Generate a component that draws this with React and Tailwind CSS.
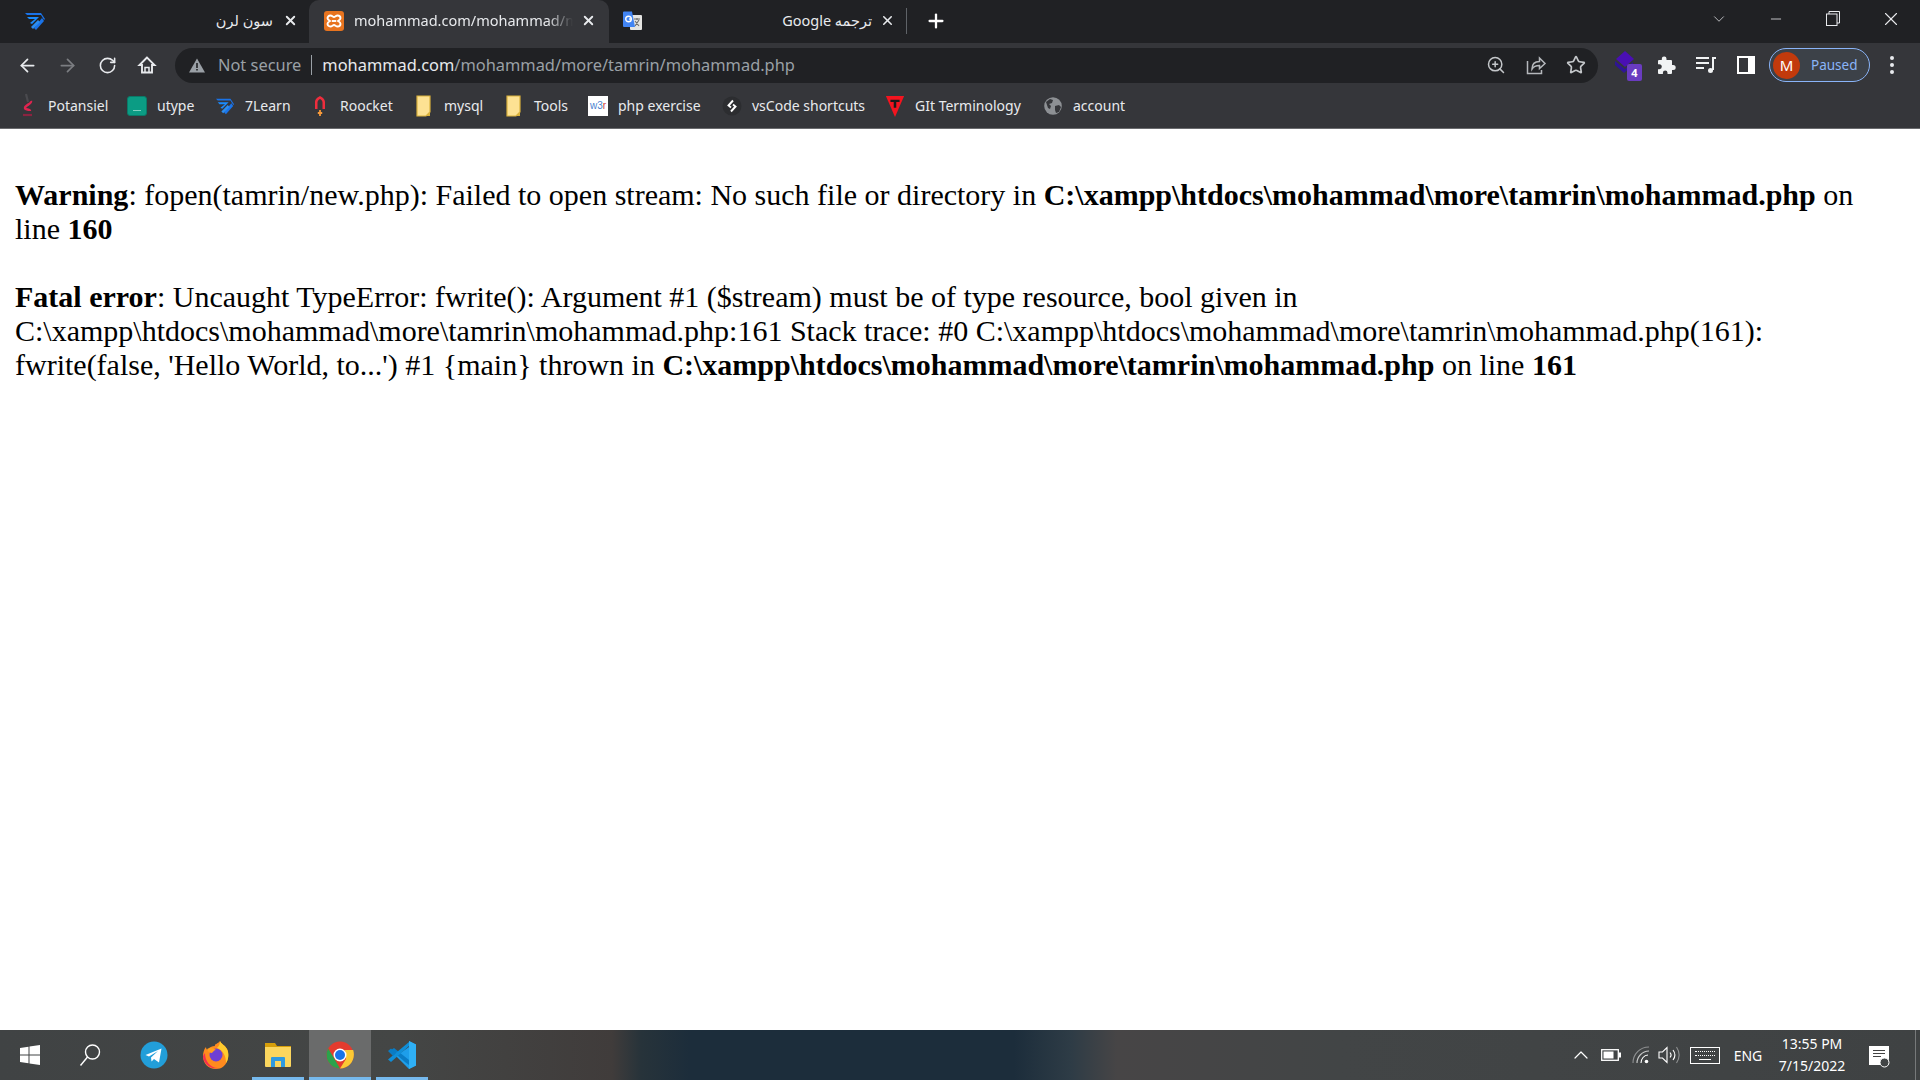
import React from "react";
import { ArrowLeft, ArrowRight, RotateCw, ZoomIn, Star, Plus, X, Minus, ChevronDown, ChevronUp } from "lucide-react";

const ui = "font-['Noto_Sans','DejaVu_Sans',sans-serif]";

function SevenLearn({ s = 22 }) {
  return (
    <svg width={s} height={s} viewBox="0 0 22 22" fill="none">
      <path d="M1 3h16l4 6-1 1-3-5H3z" fill="#1a73e8" />
      <path d="M3 7h12L8 14l-2-1 5-4H5z" fill="#1a8cff" />
      <path d="M18 8l2 3-8 9-2-2z" fill="#1a73e8" />
      <path d="M14 10l2 2-7 7-2-2z" fill="#2c8df0" />
    </svg>
  );
}
function Xampp() {
  return (
    <svg width="20" height="20" viewBox="0 0 20 20">
      <rect width="20" height="20" rx="3" fill="#e8741f" />
      <path d="M6.500 4.500c1.500 0 2.300 1.500 3.500 1.500s2-1.500 3.500-1.500c2 0 3 1.300 3 2.800 0 1.300-1.200 2-2.500 2.700 1.300.7 2.500 1.400 2.500 2.700 0 1.500-1 2.800-3 2.800-1.500 0-2.300-1.500-3.500-1.500s-2 1.500-3.500 1.500c-2 0-3-1.300-3-2.800 0-1.300 1.200-2 2.500-2.700-1.300-.7-2.500-1.400-2.500-2.700 0-1.500 1-2.800 3-2.800z" fill="none" stroke="#fff" strokeWidth="1.900" />
      <path d="M8 10h4" stroke="#fff" strokeWidth="1.900" />
    </svg>
  );
}
function Translate() {
  return (
    <svg width="22" height="22" viewBox="0 0 22 22">
      <rect x="9" y="5" width="12" height="15" rx="1" fill="#e4e4e2" />
      <path d="M13 9h6M16 8v2M14 16l4-6M14 11l4 5" stroke="#6b6b6b" strokeWidth="1.100" />
      <path d="M2 2.500a1 1 0 0 1 1-1h8l3 15.500H3a1 1 0 0 1-1-1z" fill="#4285f4" />
      <circle cx="7.500" cy="9" r="2.800" fill="none" stroke="#fff" strokeWidth="1.400" />
      <path d="M8 9h3" stroke="#fff" strokeWidth="1.300" />
    </svg>
  );
}
function Potansiel() {
  return (
    <svg width="20" height="26" viewBox="0 0 20 26" fill="none">
      <path d="M8 1l2 8" stroke="#4a4a4e" strokeWidth="2.200" />
      <path d="M13 8c1 3-6 4-6 7 0 2 5 1 5 3" stroke="#e0244f" strokeWidth="2.400" />
      <path d="M5 22h9" stroke="#8a2440" strokeWidth="2.200" />
    </svg>
  );
}
function Utype() {
  return (
    <div className="w-5 h-5 rounded-[3px] bg-[#0b9c84] border border-[#0a7a68] flex items-end justify-center pb-1">
      <div className="w-2 h-px bg-[#7fd0c2]" />
    </div>
  );
}
function Roocket() {
  return (
    <svg width="20" height="24" viewBox="0 0 20 24" fill="none">
      <path d="M5 15V8c0-3 3-5 5-6 2 1 5 3 5 6v7h-2.500V8.500c0-2-1.500-3-2.500-3.500-1 .5-2.500 1.500-2.500 3.500V15z" fill="#ee2d3d" />
      <path d="M10 16v6M7.800 19h4.400" stroke="#f6993a" strokeWidth="1.800" />
    </svg>
  );
}
function Folder() {
  return (
    <svg width="16" height="22" viewBox="0 0 16 22">
      <path d="M1 1h13v16l-4 4H1z" fill="#fde293" stroke="#d9b13c" strokeWidth="1.200" />
      <path d="M14 17v4h-4z" fill="#d9b13c" />
    </svg>
  );
}
function W3r() {
  return (
    <div className="w-5 h-5 bg-white flex items-center justify-center text-[10px] leading-none font-['Liberation_Sans',sans-serif]">
      <span className="text-[#4a7fd0]">w3</span>
      <span className="text-[#d23c3c]">r</span>
    </div>
  );
}
function VsShort() {
  return (
    <svg width="20" height="20" viewBox="0 0 20 20" fill="none">
      <circle cx="10" cy="10" r="9.500" fill="#2c2d30" />
      <path d="M11 4.500L6.500 9.500l2.500 2M9 15.500l4.500-5-2.500-2" stroke="#fff" strokeWidth="1.900" />
    </svg>
  );
}
function GitT() {
  return (
    <svg width="22" height="26" viewBox="0 0 22 26">
      <path d="M1 2h20L11 25z" fill="#f4141f" />
      <path d="M6 6h10v2.500h-3.600V15H9.600V8.500H6z" fill="#1b1b1b" />
    </svg>
  );
}
function Globe() {
  return (
    <svg width="20" height="20" viewBox="0 0 20 20">
      <circle cx="10" cy="10" r="8.800" fill="#8d9094" />
      <path d="M3 6l4-3 3 1-1 3-3 1 2 2-1 3-2-1zM12 10l4-1 2 2-2 5-3 1-1-3z" fill="#35363a" />
    </svg>
  );
}
function Share() {
  return (
    <svg width="22" height="22" viewBox="0 0 22 22" fill="none" stroke="#b5b8bc" strokeWidth="1.500">
      <path d="M2.500 7v12.500h14V16" />
      <path d="M7 15c0-5 3-7.500 7.500-7.500V4l5.500 5.500-5.500 5V11.500C11 11.500 8.500 12.500 7 15z" />
    </svg>
  );
}
function Ext() {
  return (
    <svg width="26" height="30" viewBox="0 0 26 30">
      <path d="M2 11l10 8 8-7v3l-9 8-9-8z" fill="#2f1496" />
      <path d="M12 1l9 8-9 8-9-8z" fill="#4a0fb4" />
    </svg>
  );
}
function PuzzleFill() {
  return (
    <svg width="20" height="20" viewBox="0 0 20 20" fill="#f1f3f4">
      <path d="M8 1.500a2.300 2.300 0 0 1 2.500 2.300V5H15a1 1 0 0 1 1 1v4h1.200a2.300 2.300 0 0 1 0 5H16v3a1 1 0 0 1-1 1h-3.500v-1.300a2.300 2.300 0 0 0-4.600 0V19H3a1 1 0 0 1-1-1v-3.800h1.300a2.500 2.500 0 0 0 0-5H2V6a1 1 0 0 1 1-1h2.800V3.800A2.300 2.300 0 0 1 8 1.500z" />
    </svg>
  );
}
function Music() {
  return (
    <svg width="22" height="20" viewBox="0 0 22 20" fill="none" stroke="#f1f3f4" strokeWidth="2">
      <path d="M1 3h13M1 8h13M1 13h8" />
      <path d="M18 15V3h3" />
      <circle cx="15.500" cy="15.500" r="2.500" fill="#f1f3f4" stroke="none" />
      <path d="M18 2v13" />
    </svg>
  );
}
function Side() {
  return (
    <div className="w-[18px] h-[18px] bg-white flex items-center pl-[2px]">
      <div className="w-[9px] h-[14px] bg-[#35363a]" />
    </div>
  );
}
function Home() {
  return (
    <svg width="20" height="20" viewBox="0 0 20 20" fill="none" stroke="#e8eaed" strokeWidth="1.900">
      <path d="M10 2.500L2.500 10H5v7.500h10V10h2.500z" />
      <path d="M8 17.500v-5h4v5" strokeWidth="1.500" />
    </svg>
  );
}
function Warn() {
  return (
    <svg width="16" height="15" viewBox="0 0 16 15">
      <path d="M8 .5L16 14.500H0z" fill="#9aa0a6" />
      <path d="M7.200 5h1.600v5H7.200zM7.200 11h1.600v1.600H7.200z" fill="#202124" />
    </svg>
  );
}
function Restore() {
  return (
    <svg width="14" height="15" viewBox="0 0 14 15" fill="none" stroke="#e8eaed" strokeWidth="1">
      <rect x=".5" y="3" width="10.500" height="11.500" />
      <path d="M3 3V.5h10.500V12H11" />
    </svg>
  );
}
function WinLogo() {
  return (
    <svg width="20" height="20" viewBox="0 0 20 20" fill="#fff">
      <path d="M0 3l8.500-1.300v7.800H0zM9.500 1.500L20 0v9.500H9.500zM0 10.500h8.500v7.800L0 17zM9.500 10.500H20V20L9.500 18.500z" />
    </svg>
  );
}
function SearchTb() {
  return (
    <svg width="22" height="24" viewBox="0 0 22 24" fill="none" stroke="#fff" strokeWidth="1.400">
      <circle cx="13.500" cy="9" r="7" />
      <path d="M8.500 14L1.500 22.500" />
    </svg>
  );
}
function Telegram() {
  return (
    <svg width="28" height="28" viewBox="0 0 28 28">
      <circle cx="14" cy="14" r="13.500" fill="#229ed9" />
      <path d="M5.500 14l16-6.500-2.500 14-5-3.500-2.500 2.500-.5-4 7-6.500-9 5.500z" fill="#fff" />
    </svg>
  );
}
function Firefox() {
  return (
    <svg width="28" height="30" viewBox="0 0 28 30">
      <path d="M18 1c1 3 5 4 7 8 3 6 1 20-11 20C6 29 1 23 1 16c0-3 1-7 3-9 0 2 1 3 2 3 1-3 4-4 7-4-1-2 3-2 5-5z" fill="#ff8a1e" />
      <path d="M18 1c1 3 5 4 7 8 2 4 2 10-1 14 0-7-3-13-9-15 2-2 3-4 3-7z" fill="#ffcb2e" />
      <path d="M3 13c0 8 5 15 13 15C8 30 1 23 1 16z" fill="#f5304e" />
      <circle cx="14" cy="15" r="6.500" fill="#6d3fd4" />
      <path d="M5 9c3-2 7-1 9 1-2 0-3 2-4 3-2 0-4-1-5-4z" fill="#ff9f1e" />
    </svg>
  );
}
function Files() {
  return (
    <svg width="28" height="26" viewBox="0 0 28 26">
      <path d="M1 1h10l2 3h14v3H1z" fill="#d69e0a" />
      <path d="M1 5h26v19a1 1 0 0 1-1 1H2a1 1 0 0 1-1-1z" fill="#fbd65e" />
      <path d="M7 25V16a1 1 0 0 1 1-1h12a1 1 0 0 1 1 1v9h-4v-6h-6v6z" fill="#2f9ae0" />
    </svg>
  );
}
function Chrome() {
  return (
    <svg width="28" height="28" viewBox="0 0 28 28">
      <circle cx="14" cy="14" r="13.500" fill="#e33b2e" />
      <path d="M2.200 7.500L8.500 18l5.500 9.500A13.500 13.500 0 0 1 2.200 7.500z" fill="#2ba24c" />
      <path d="M14 27.500L20 18l-1-9h8.200C30 18 24 27.500 14 27.500z" fill="#fcc934" />
      <circle cx="14" cy="14" r="6.500" fill="#fff" />
      <circle cx="14" cy="14" r="5" fill="#1a73e8" />
    </svg>
  );
}
function VSCode() {
  return (
    <svg width="30" height="30" viewBox="0 0 30 30">
      <path d="M22 1l7 3.500v21L22 29 9 16l13-9V1z" fill="#1e9eea" />
      <path d="M22 1v28l7-3.500v-21z" fill="#2fb0f5" />
      <path d="M4 10l3-2 15 12v5l-4-3z" fill="#0a7cc5" />
      <path d="M1 19.500l3 2.500L22 6V2z" fill="#0f8ed8" />
      <path d="M1 11l3-2.500 5 4.500-3 3z" fill="#0a7cc5" />
    </svg>
  );
}
function Battery() {
  return (
    <svg width="20" height="12" viewBox="0 0 20 12" fill="none">
      <rect x=".7" y=".7" width="16.600" height="10.600" stroke="#fff" strokeWidth="1.300" />
      <rect x="2.500" y="2.500" width="10" height="7" fill="#fff" />
      <rect x="18" y="3.500" width="2" height="5" fill="#fff" />
    </svg>
  );
}
function Wifi() {
  return (
    <svg width="18" height="18" viewBox="0 0 18 18" fill="none">
      <path d="M1 17C1 8 8 1 17 1" stroke="#8f9192" strokeWidth="1.100" />
      <path d="M5 17c0-6 5-12 12-12" stroke="#c9caca" strokeWidth="1.100" />
      <path d="M9 17c0-4 3-8 7-8" stroke="#fff" strokeWidth="1.100" />
      <circle cx="14.500" cy="15.500" r="1.800" fill="#fff" />
    </svg>
  );
}
function Speaker() {
  return (
    <svg width="22" height="18" viewBox="0 0 22 18" fill="none" stroke="#fff" strokeWidth="1.100">
      <path d="M1 6h3.500L9 1.500v15L4.500 12H1z" />
      <path d="M12 6.500c1.300 1.500 1.300 3.500 0 5M15 4c2.300 3 2.300 7 0 10" />
      <path d="M18.500 1c3.300 5 3.300 11 0 16" stroke="#8f9192" />
    </svg>
  );
}
function Keyboard() {
  const row = "h-[2px] border-t border-dotted border-white";
  return (
    <div className="w-[30px] h-[17px] border border-white flex flex-col justify-center gap-[2px] px-1">
      <div className={row} />
      <div className={row} />
      <div className="h-px bg-white mx-1" />
    </div>
  );
}
function Notif() {
  return (
    <div className="relative w-5 h-[19px] bg-white flex flex-col gap-[2px] px-1 pt-1">
      <div className="h-px bg-[#444]" />
      <div className="h-px bg-[#444]" />
      <div className="h-px w-2 bg-[#444]" />
      <svg className="absolute -right-[1px] -bottom-[3px]" width="11" height="11" viewBox="0 0 11 11" fill="#424546" stroke="#fff" strokeWidth="1">
        <circle cx="5.500" cy="5.500" r="4.500" />
      </svg>
    </div>
  );
}

const bookmarks = [
  ["Potansiel", <Potansiel />, "w-[109px]"],
  ["utype", <Utype />, "w-[88px]"],
  ["7Learn", <SevenLearn s={20} />, "w-[95px]"],
  ["Roocket", <Roocket />, "w-[104px]"],
  ["mysql", <Folder />, "w-[90px]"],
  ["Tools", <Folder />, "w-[84px]"],
  ["php exercise", <W3r />, "w-[134px]"],
  ["vsCode shortcuts", <VsShort />, "w-[163px]"],
  ["GIt Terminology", <GitT />, "w-[158px]"],
  ["account", <Globe />, "w-[90px]"],
];

function Cell({ className = "", children }) {
  return <div className={`flex items-center justify-center shrink-0 ${className}`}>{children}</div>;
}

function TaskItem({ active, open, children }) {
  return (
    <div className={`relative w-[62px] h-full flex items-center justify-center ${active ? "bg-[#6a6b6b]" : ""}`}>
      {children}
      {open && <div className={`absolute bottom-0 h-[3px] bg-[#76b9ed] ${active ? "inset-x-0" : "inset-x-[5px]"}`} />}
    </div>
  );
}

export default function App() {
  return (
    <div className={`w-full h-screen flex flex-col overflow-hidden bg-white ${ui}`}>
      {/* Tab strip */}
      <div className="h-[43px] shrink-0 bg-[#202124] flex items-stretch text-[#e8eaed] text-[14.5px]">
        <div className="w-[309px] flex items-center pl-6 pr-[11px] pb-[2px]">
          <SevenLearn />
          <span className="ml-auto">سون لرن</span>
          <X size={15} strokeWidth={3} className="ml-[10px]" />
        </div>
        <div className="w-[300px] bg-[#35363a] rounded-t-[10px] flex items-center pl-[15px] pr-[13px] pb-[2px]">
          <Xampp />
          <span className="ml-[10px] w-[219px] whitespace-nowrap overflow-hidden [mask-image:linear-gradient(90deg,#000_88%,transparent)]">mohammad.com/mohammad/more</span>
          <X size={15} strokeWidth={3} className="ml-auto" />
        </div>
        <div className="w-[297px] flex items-center pl-3 pr-[11px] pb-[2px]">
          <Translate />
          <span className="ml-auto" dir="rtl">ترجمه Google</span>
          <X size={15} strokeWidth={2.500} className="ml-[8px]" />
        </div>
        <div className="w-px h-[26px] self-center bg-[#5f6368] mb-[2px]" />
        <Cell className="w-[58px] pb-[2px]"><Plus size={22} strokeWidth={2.500} color="#fff" /></Cell>
        <div className="ml-auto flex items-center pb-[6px]">
          <Cell className="w-[58px]"><ChevronDown size={18} strokeWidth={1} /></Cell>
          <Cell className="w-[56px]"><Minus size={16} strokeWidth={1.200} /></Cell>
          <Cell className="w-[58px]"><Restore /></Cell>
          <Cell className="w-[58px]"><X size={22} strokeWidth={1.200} /></Cell>
        </div>
      </div>

      {/* Toolbar */}
      <div className="h-[44px] shrink-0 bg-[#35363a] flex items-center">
        <div className="flex items-center pl-[7px] w-[175px]">
          <Cell className="w-10"><ArrowLeft size={21} color="#e8eaed" strokeWidth={2} /></Cell>
          <Cell className="w-10"><ArrowRight size={21} color="#7b7d81" strokeWidth={2} /></Cell>
          <Cell className="w-10"><RotateCw size={19} color="#e8eaed" strokeWidth={2} /></Cell>
          <Cell className="w-10"><Home /></Cell>
        </div>
        <div className="w-[1423px] h-[35px] bg-[#202124] rounded-full flex items-center pl-[14px] pr-[2px]">
          <Warn />
          <span className="ml-[13px] text-[16.400px] text-[#9aa0a6]">Not secure</span>
          <div className="w-px h-5 bg-[#9aa0a6] mx-[10px]" />
          <span className="text-[16.400px] text-[#e8eaed]">mohammad.com<span className="text-[#9aa0a6]">/mohammad/more/tamrin/mohammad.php</span></span>
          <div className="ml-auto flex items-center">
            <Cell className="w-10"><ZoomIn size={20} color="#c4c7ca" strokeWidth={1.800} /></Cell>
            <Cell className="w-10"><Share /></Cell>
            <Cell className="w-10"><Star size={20} color="#c4c7ca" strokeWidth={2} /></Cell>
          </div>
        </div>
        <Cell className="relative w-[56px]">
          <Ext />
          <div className="absolute left-[29px] top-[14px] w-[15px] h-[17px] rounded-[2px] bg-[#6a3cc0] text-white text-[11px] font-bold leading-[17px] text-center">4</div>
        </Cell>
        <Cell className="w-[24px]"><PuzzleFill /></Cell>
        <Cell className="w-[56px]"><Music /></Cell>
        <Cell className="w-[24px]"><Side /></Cell>
        <div className="ml-[11px] w-[101px] h-[34px] rounded-full border border-[#8ab4f8] bg-[#3c4148] flex items-center pl-[3px]">
          <div className="w-[27px] h-[27px] rounded-full bg-[#c23a0c] text-white text-[15px] flex items-center justify-center">M</div>
          <span className="ml-[11px] text-[13.500px] text-[#8ab4f8]">Paused</span>
        </div>
        <div className="ml-[20px] flex flex-col gap-[3px]">
          <div className="w-1 h-1 rounded-full bg-[#e8eaed]" />
          <div className="w-1 h-1 rounded-full bg-[#e8eaed]" />
          <div className="w-1 h-1 rounded-full bg-[#e8eaed]" />
        </div>
      </div>

      {/* Bookmarks */}
      <div className="h-[42px] shrink-0 bg-[#35363a] border-b border-[#6a6b6e] flex items-center pl-[18px] pb-[4px] text-[14px] text-[#e8eaed]">
        {bookmarks.map(([label, icon, w]) => (
          <div key={label} className={`flex items-center gap-[10px] shrink-0 whitespace-nowrap ${w}`}>
            <div className="w-5 flex items-center justify-center">{icon}</div>
            <span>{label}</span>
          </div>
        ))}
      </div>

      {/* Page */}
      <div className="flex-1 min-h-0 bg-white px-[15px] pt-[15px] text-black text-[30px] leading-[34px] font-['Liberation_Serif',serif]">
        <br />
        <b>Warning</b>: fopen(tamrin/new.php): Failed to open stream: No such file or directory in <b>C:\xampp\htdocs\mohammad\more\tamrin\mohammad.php</b> on line <b>160</b>
        <br />
        <br />
        <b>Fatal error</b>: Uncaught TypeError: fwrite(): Argument #1 ($stream) must be of type resource, bool given in C:\xampp\htdocs\mohammad\more\tamrin\mohammad.php:161 Stack trace: #0 C:\xampp\htdocs\mohammad\more\tamrin\mohammad.php(161): fwrite(false, 'Hello World, to...') #1 {"{"}main{"}"} thrown in <b>C:\xampp\htdocs\mohammad\more\tamrin\mohammad.php</b> on line <b>161</b>
      </div>

      {/* Taskbar */}
      <div className="h-[50px] shrink-0 flex items-stretch text-white bg-[linear-gradient(90deg,#404344_0px,#444645_400px,#403c3b_612px,#27333a_641px,#1c2d3b_690px,#1c2d3b_1014px,#2e3c46_1071px,#474546_1117px,#424546_1340px,#3f4243_1920px)]">
        <Cell className="w-[60px]"><WinLogo /></Cell>
        <Cell className="w-[60px] mr-[3px]"><SearchTb /></Cell>
        <TaskItem><Telegram /></TaskItem>
        <TaskItem><Firefox /></TaskItem>
        <TaskItem open><Files /></TaskItem>
        <TaskItem open active><Chrome /></TaskItem>
        <TaskItem open><VSCode /></TaskItem>
        <div className="ml-auto flex items-stretch">
          <Cell className="w-[31px]"><ChevronUp size={24} strokeWidth={1.200} /></Cell>
          <Cell className="w-[30px]"><Battery /></Cell>
          <Cell className="w-[29px]"><Wifi /></Cell>
          <Cell className="w-[27px]"><Speaker /></Cell>
          <Cell className="w-[46px]"><Keyboard /></Cell>
          <Cell className="w-[40px] text-[14px]">ENG</Cell>
          <div className="w-[88px] flex flex-col items-center justify-center text-[14px] leading-[22px]">
            <span>13:55 PM</span>
            <span>7/15/2022</span>
          </div>
          <Cell className="w-[46px]"><Notif /></Cell>
          <div className="w-[18px] flex justify-end pr-1">
            <div className="w-px bg-[#77797a]" />
          </div>
        </div>
      </div>
    </div>
  );
}
